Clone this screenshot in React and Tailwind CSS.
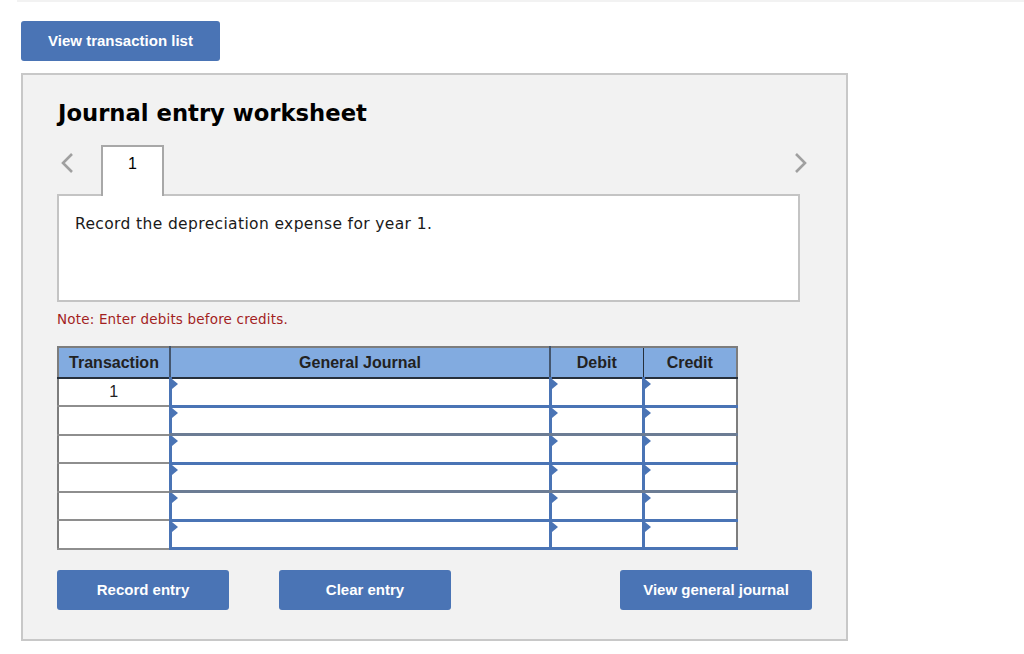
import React from 'react';

const rows = ['1', '', '', '', '', ''];

function Cell({ index }) {
  const bottom = index === 5 ? 'border-b-[#4a74b5]' : index % 2 === 0 ? 'border-b-[#4a74b5]' : 'border-b-[#6c7c94]';
  return (
    <td className={`relative p-0 border-l-[3px] border-b-[3px] border-t-[1px] border-t-[#9a9a9a] border-l-[#4a74b5] bg-white ${bottom}`}>
      <span className="absolute left-0 top-0 w-0 h-0 border-y-[5px] border-y-transparent border-l-[6px] border-l-[#4a74b5]" />
    </td>
  );
}

function Btn({ children, className }) {
  return (
    <button className={`h-10 rounded-[3px] bg-[#4a74b5] text-white text-[15px] font-bold font-['Liberation_Sans',Arial,sans-serif] ${className}`}>
      {children}
    </button>
  );
}

export default function App() {
  return (
    <div className="w-[1024px] h-[654px] overflow-hidden bg-white font-['DejaVu_Sans',Verdana,sans-serif]">
      <div className="ml-[17px] h-[2px] bg-[#f2f2f2]" />
      <div className="pl-[21px] pt-[19px]">
        <Btn className="w-[199px]">View transaction list</Btn>

        <div className="mt-3 w-[827px] h-[568px] border-2 border-[#c8c8c8] bg-[#f2f2f2] pl-[34px] pt-[23px]">
          <h1 className="ml-px text-[22.7px] leading-[30px] font-bold text-black">Journal entry worksheet</h1>

          <div className="mt-[17px] relative w-[743px] h-[49px] flex items-start">
            <svg className="absolute left-[2px] top-[6px]" width="16" height="24" viewBox="0 0 16 24" fill="none">
              <path d="M13 3 L4 12 L13 21" stroke="#a0a0a0" strokeWidth="2.6" />
            </svg>
            <svg className="absolute right-[-9px] top-[6px]" width="16" height="24" viewBox="0 0 16 24" fill="none">
              <path d="M3 3 L12 12 L3 21" stroke="#a0a0a0" strokeWidth="2.6" />
            </svg>
            <div className="relative z-10 ml-[44px] w-[63px] h-[51px] border-x-2 border-t-2 border-[#a8a8a8] border-b-0 bg-white text-center text-[16px] leading-[34px] font-['Liberation_Sans',Arial,sans-serif] text-black">
              1
            </div>
          </div>

          <div className="w-[743px] h-[108px] border-2 border-[#c4c4c4] bg-white pl-4 pt-[18px] text-[15.5px] tracking-[0.37px] leading-5 text-[#1a1a1a]">
            Record the depreciation expense for year 1.
          </div>

          <p className="mt-[7px] text-[13.5px] tracking-[0.18px] leading-5 text-[#a31f1f]">Note: Enter debits before credits.</p>

          <table className="mt-[17px] w-[679px] h-[204px] table-fixed border-collapse border-2 border-[#7d7d7d] font-['Liberation_Sans',Arial,sans-serif] text-[#222]">
            <colgroup>
              <col className="w-[112px]" />
              <col className="w-[380px]" />
              <col className="w-[93px]" />
              <col className="w-[94px]" />
            </colgroup>
            <thead>
              <tr className="h-[31px] bg-[#82abe0] text-[16px] font-bold border-b-2 border-b-[#26303c]">
                <th className="border-r-2 border-r-[#44566e] font-bold">Transaction</th>
                <th className="border-r-2 border-r-[#44566e] font-bold">General Journal</th>
                <th className="border-r border-r-[#26303c] font-bold">Debit</th>
                <th className="font-bold">Credit</th>
              </tr>
            </thead>
            <tbody>
              {rows.map((r, i) => (
                <tr key={i} className="h-[28px]">
                  <td className="bg-white border-b-2 border-b-[#8e8e8e] text-center text-[16px] p-0">{r}</td>
                  <Cell index={i} />
                  <Cell index={i} />
                  <Cell index={i} />
                </tr>
              ))}
            </tbody>
          </table>

          <div className="mt-5 w-[755px] flex justify-between">
            <div className="flex gap-[50px]">
              <Btn className="w-[172px]">Record entry</Btn>
              <Btn className="w-[172px]">Clear entry</Btn>
            </div>
            <Btn className="w-[192px]">View general journal</Btn>
          </div>
        </div>
      </div>
    </div>
  );
}
